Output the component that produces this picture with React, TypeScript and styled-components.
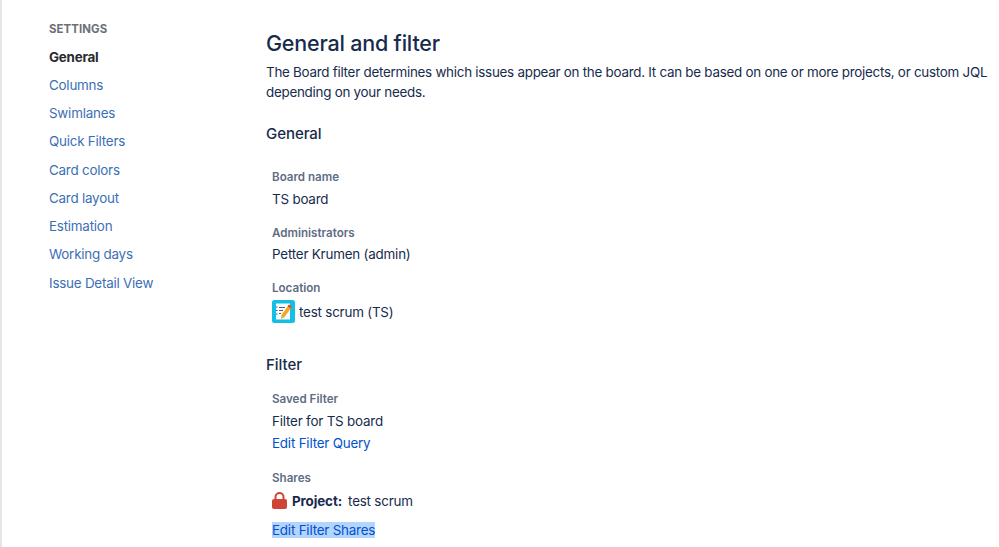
import React from "react";
import styled, { createGlobalStyle } from "styled-components";

const Global = createGlobalStyle`
  html, body { margin: 0; padding: 0; background: #fff; overflow: hidden; }
  body { font-family: Inter, "Liberation Sans", sans-serif; font-size: 14px; color: #172b4d; }
`;
const Page = styled.div`
  width: 999px; height: 547px; box-sizing: border-box; display: flex; overflow: hidden;
  border-left: 2px solid #e4e5ea;
`;
const Sidebar = styled.nav`
  width: 264px; flex: none; box-sizing: border-box; padding: 22px 0 0 47px;
  display: flex; flex-direction: column;
`;
const SideTitle = styled.div`
  font-size: 11.4px; line-height: 14px; font-weight: 700; color: #6b6f76; letter-spacing: 0.1px; margin-bottom: 6.5px;
`;
const SideItem = styled.a<{ $active?: boolean }>`
  display: block; height: 28.25px; line-height: 28.25px; font-size: 13.4px; letter-spacing: -0.22px; white-space: nowrap;
  color: ${p => (p.$active ? "#2a2a2e" : "#3b6fb5")};
  font-weight: ${p => (p.$active ? 700 : 400)};
`;
const Main = styled.main`
  flex: 1; min-width: 0; padding-top: 29px; display: flex; flex-direction: column; white-space: nowrap;
`;
const H1 = styled.h1`
  margin: 0; font-size: 21.5px; letter-spacing: -0.2px; line-height: 28px; font-weight: 500; color: #172b4d;
`;
const Intro = styled.p`
  margin: 5px 0 0; font-size: 13.4px; letter-spacing: -0.26px; line-height: 20px; color: #172b4d;
`;
const H2 = styled.h2<{ $top: number }>`
  margin: ${p => p.$top}px 0 0; font-size: 15px; letter-spacing: -0.05px; line-height: 20px; font-weight: 500; color: #172b4d;
`;
const Fields = styled.div<{ $top: number }>`
  margin-top: ${p => p.$top}px; padding-left: 6px; display: flex; flex-direction: column;
`;
const Label = styled.div<{ $top?: number }>`
  margin-top: ${p => p.$top ?? 0}px; font-size: 11.6px; line-height: 16px; font-weight: 600; color: #5e6c84;
`;
const Value = styled.div<{ $top?: number }>`
  margin-top: ${p => p.$top ?? 4}px; font-size: 13.4px; letter-spacing: -0.2px; line-height: 20px; color: #172b4d; display: flex; align-items: center;
`;
const LinkRow = styled.a<{ $top?: number }>`
  margin-top: ${p => p.$top ?? 2}px; font-size: 13.4px; letter-spacing: -0.2px; line-height: 20px; color: #0052cc; align-self: flex-start;
`;
const Selected = styled.span`
  background: #b3d4fd; display: inline-block; line-height: 16px; height: 16px;
`;
const ProjectIcon = styled.svg`
  width: 23px; height: 23px; margin-right: 4px; flex: none;
`;
const LockIcon = styled.svg`
  width: 15px; height: 17px; margin-right: 5px; flex: none;
`;
const Strong = styled.strong`
  font-weight: 700; letter-spacing: -0.1px; margin-right: 6px;
`;
const IconValue = styled(Value)`
  height: 23px;
`;

const items = ["Columns", "Swimlanes", "Quick Filters", "Card colors", "Card layout", "Estimation", "Working days", "Issue Detail View"];

export default function App() {
  return (
    <Page>
      <Global />
      <Sidebar>
        <SideTitle>SETTINGS</SideTitle>
        <SideItem $active>General</SideItem>
        {items.map(i => <SideItem key={i}>{i}</SideItem>)}
      </Sidebar>
      <Main>
        <H1>General and filter</H1>
        <Intro>
          The Board filter determines which issues appear on the board. It can be based on one or more projects, or custom JQL<br />
          depending on your needs.
        </Intro>
        <H2 $top={22}>General</H2>
        <Fields $top={25}>
          <Label>Board name</Label>
          <Value>TS board</Value>
          <Label $top={16}>Administrators</Label>
          <Value $top={3}>Petter Krumen (admin)</Value>
          <Label $top={16}>Location</Label>
          <IconValue>
            <ProjectIcon viewBox="0 0 23 23">
              <rect width="23" height="23" rx="2.5" fill="#13bfe3" />
              <rect x="4" y="3.5" width="14" height="16" fill="#f6fbfd" />
              <path d="M4 7h1.500M4 10.500h1.500M4 14h1.500M7 7.500h6M7 10.500h4M7 13.500h2" stroke="#56636f" strokeWidth="1" />
              <path d="M17 4.500l3 2.200-7.500 10.300-3.500 2 .5-4z" fill="#f5a623" />
              <path d="M17 4.500l3 2.200-1.300 1.800-3-2.200z" fill="#e0452f" />
            </ProjectIcon>
            test scrum (TS)
          </IconValue>
        </Fields>
        <H2 $top={32}>Filter</H2>
        <Fields $top={16}>
          <Label>Saved Filter</Label>
          <Value>Filter for TS board</Value>
          <LinkRow>Edit Filter Query</LinkRow>
          <Label $top={17}>Shares</Label>
          <IconValue $top={3}>
            <LockIcon viewBox="0 0 15 17">
              <path d="M3.500 8V5a4 4 0 0 1 8 0v3" fill="none" stroke="#d04437" strokeWidth="2" />
              <rect y="7" width="15" height="10" rx="2" fill="#d04437" />
            </LockIcon>
            <Strong>Project:</Strong> test scrum
          </IconValue>
          <LinkRow $top={8}><Selected>Edit Filter Shares</Selected></LinkRow>
        </Fields>
      </Main>
    </Page>
  );
}
